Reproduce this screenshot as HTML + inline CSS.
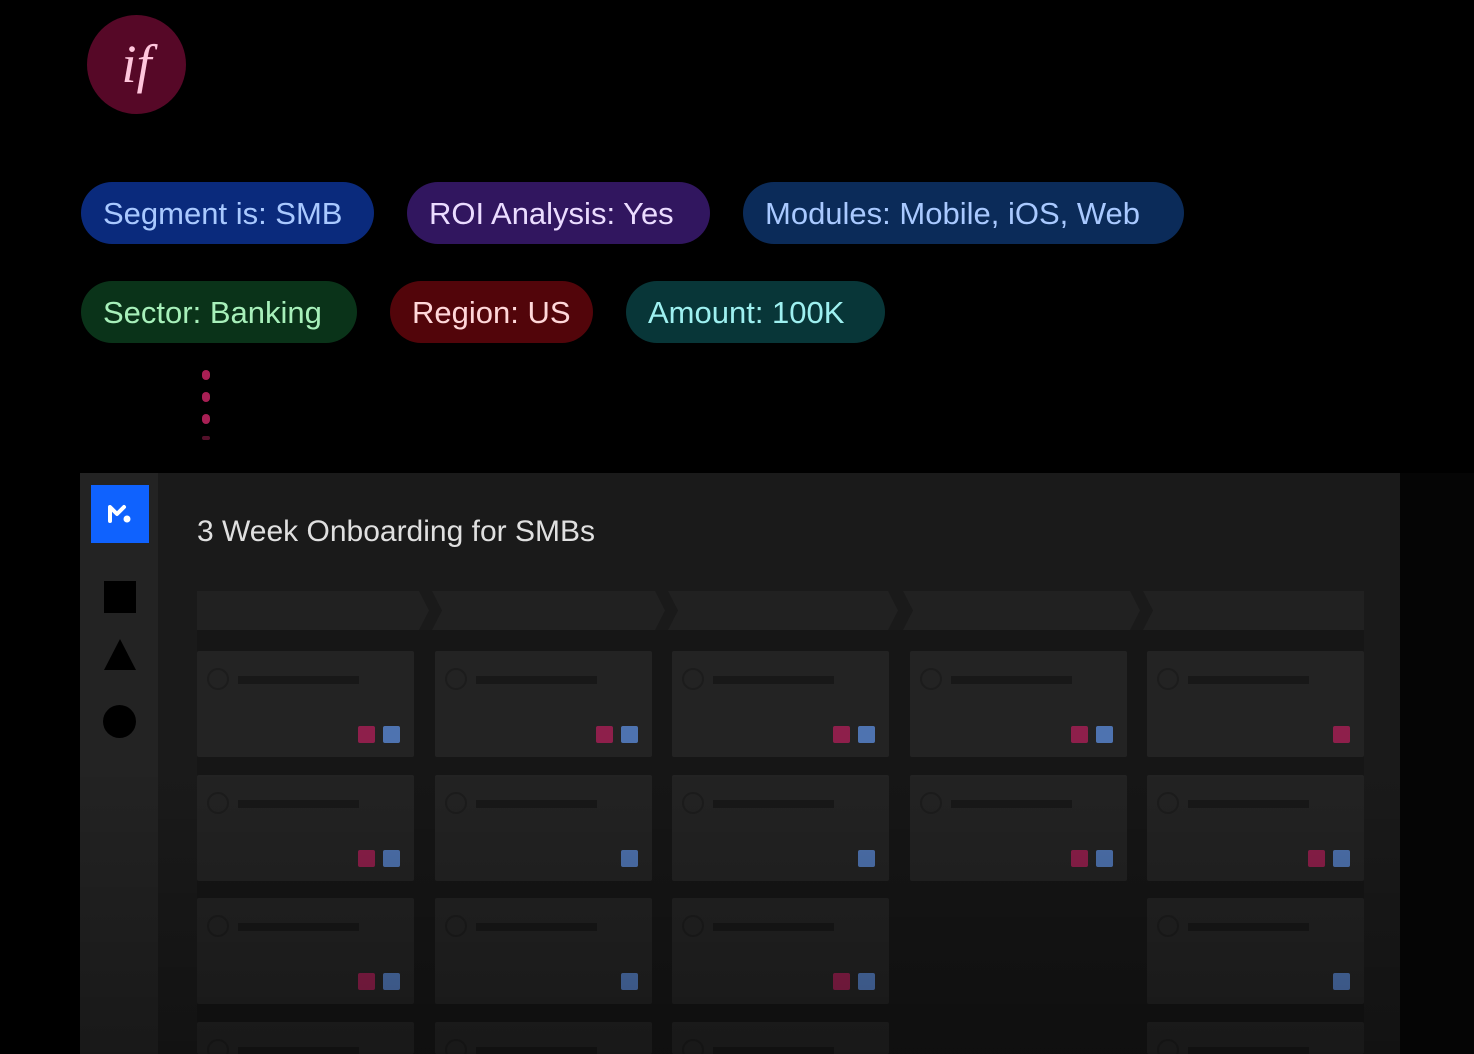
<!DOCTYPE html>
<html style="width:1474px;height:1054px;overflow:hidden"><head><meta charset="utf-8"><style>
*{margin:0;padding:0;box-sizing:border-box}
body{width:1474px;height:1054px;background:#000;position:relative;overflow:hidden;font-family:"Liberation Sans",sans-serif}
.a{position:absolute}
.logo{left:87px;top:15px;width:99px;height:99px;border-radius:50%;background:#560827;color:#ffc6dc;font-family:"Liberation Serif",serif;font-style:italic;font-size:54px;line-height:99px;text-align:center}
.pill{position:absolute;height:62px;border-radius:31px;font-size:31px;line-height:64px;padding-left:22px;white-space:nowrap}
.dot{position:absolute;left:202px;width:8px;height:10px;border-radius:4px;background:#a81f54}
.panel{left:80px;top:473px;width:1320px;height:581px;background:#1a1a1a}
.side{left:80px;top:473px;width:78px;height:581px;background:#232323}
.hdr{position:absolute;top:591px;height:39px;background:#212121}
.card{position:absolute;width:217px;height:106px;background:#232323;border-radius:2px}
.card .c{position:absolute;left:10px;top:17px;width:22px;height:22px;border-radius:50%;border:2px solid #1c1c1c}
.card .l{position:absolute;left:41px;top:25px;width:121px;height:8px;background:#181818}
.sq{position:absolute;top:75px;width:17px;height:17px;border-radius:2px}
.r{background:#8e1f4b}.b{background:#4e73b0}
.clip{position:absolute;left:0;top:0;width:1474px;height:1054px;overflow:hidden}
</style></head><body><div class="clip">
<div class="a logo">if</div>

<div class="pill" style="left:81px;top:182px;width:293px;background:#0a2a7c;color:#a9c9ff">Segment is: SMB</div>
<div class="pill" style="left:407px;top:182px;width:303px;background:#31165f;color:#ebdcff">ROI Analysis: Yes</div>
<div class="pill" style="left:743px;top:182px;width:441px;background:#0b2b59;color:#a9c9ff">Modules: Mobile, iOS, Web</div>
<div class="pill" style="left:81px;top:281px;width:276px;background:#0a3319;color:#a7f0ba">Sector: Banking</div>
<div class="pill" style="left:390px;top:281px;width:203px;background:#52050a;color:#ffd7d9">Region: US</div>
<div class="pill" style="left:626px;top:281px;width:259px;background:#083638;color:#9ef0f0">Amount: 100K</div>

<div class="dot" style="top:370px"></div>
<div class="dot" style="top:392px"></div>
<div class="dot" style="top:414px"></div>
<div class="dot" style="top:436px;height:4px;opacity:.5"></div>

<div class="a panel"></div>
<div class="a side"></div>
<div class="a" style="left:91px;top:485px;width:58px;height:58px;background:#0f62fe"></div>
<svg class="a" style="left:107px;top:503px" width="26" height="22" viewBox="0 0 26 22"><path d="M3 18V4l7 7 7-7" stroke="#fff" stroke-width="4" fill="none" stroke-linecap="round" stroke-linejoin="round"/><circle cx="20" cy="16" r="3.5" fill="#fff"/></svg>
<div class="a" style="left:104px;top:581px;width:32px;height:32px;background:#000"></div>
<div class="a" style="left:104px;top:639px;width:0;height:0;border-left:16px solid transparent;border-right:16px solid transparent;border-bottom:31px solid #000"></div>
<div class="a" style="left:103px;top:705px;width:33px;height:33px;border-radius:50%;background:#000"></div>
<div class="a" style="left:197px;top:515px;color:#e0e0e0;font-size:30px">3 Week Onboarding for SMBs</div>

<div class="a" style="left:197px;top:630px;width:1167px;height:424px;background:#161616"></div>
<div class="hdr" style="left:197px;width:232px;clip-path:polygon(0 0,222px 0,232px 50%,222px 100%,0 100%)"></div>
<div class="hdr" style="left:432px;width:233px;clip-path:polygon(0 0,223px 0,233px 50%,223px 100%,0 100%,10px 50%)"></div>
<div class="hdr" style="left:668px;width:230px;clip-path:polygon(0 0,220px 0,230px 50%,220px 100%,0 100%,10px 50%)"></div>
<div class="hdr" style="left:903px;width:237px;clip-path:polygon(0 0,227px 0,237px 50%,227px 100%,0 100%,10px 50%)"></div>
<div class="hdr" style="left:1143px;width:221px;clip-path:polygon(0 0,221px 0,221px 100%,0 100%,10px 50%)"></div>

<div class="card" style="left:197px;top:651px"><div class="c"></div><div class="l"></div><div class="sq r" style="left:161px"></div><div class="sq b" style="left:186px"></div></div>
<div class="card" style="left:435px;top:651px"><div class="c"></div><div class="l"></div><div class="sq r" style="left:161px"></div><div class="sq b" style="left:186px"></div></div>
<div class="card" style="left:672px;top:651px"><div class="c"></div><div class="l"></div><div class="sq r" style="left:161px"></div><div class="sq b" style="left:186px"></div></div>
<div class="card" style="left:910px;top:651px"><div class="c"></div><div class="l"></div><div class="sq r" style="left:161px"></div><div class="sq b" style="left:186px"></div></div>
<div class="card" style="left:1147px;top:651px"><div class="c"></div><div class="l"></div><div class="sq r" style="left:186px"></div></div>

<div class="card" style="left:197px;top:775px"><div class="c"></div><div class="l"></div><div class="sq r" style="left:161px"></div><div class="sq b" style="left:186px"></div></div>
<div class="card" style="left:435px;top:775px"><div class="c"></div><div class="l"></div><div class="sq b" style="left:186px"></div></div>
<div class="card" style="left:672px;top:775px"><div class="c"></div><div class="l"></div><div class="sq b" style="left:186px"></div></div>
<div class="card" style="left:910px;top:775px"><div class="c"></div><div class="l"></div><div class="sq r" style="left:161px"></div><div class="sq b" style="left:186px"></div></div>
<div class="card" style="left:1147px;top:775px"><div class="c"></div><div class="l"></div><div class="sq r" style="left:161px"></div><div class="sq b" style="left:186px"></div></div>

<div class="card" style="left:197px;top:898px"><div class="c"></div><div class="l"></div><div class="sq r" style="left:161px"></div><div class="sq b" style="left:186px"></div></div>
<div class="card" style="left:435px;top:898px"><div class="c"></div><div class="l"></div><div class="sq b" style="left:186px"></div></div>
<div class="card" style="left:672px;top:898px"><div class="c"></div><div class="l"></div><div class="sq r" style="left:161px"></div><div class="sq b" style="left:186px"></div></div>
<div class="card" style="left:1147px;top:898px"><div class="c"></div><div class="l"></div><div class="sq b" style="left:186px"></div></div>

<div class="card" style="left:197px;top:1022px;height:32px"><div class="c"></div><div class="l"></div></div>
<div class="card" style="left:435px;top:1022px;height:32px"><div class="c"></div><div class="l"></div></div>
<div class="card" style="left:672px;top:1022px;height:32px"><div class="c"></div><div class="l"></div></div>
<div class="card" style="left:1147px;top:1022px;height:32px"><div class="c"></div><div class="l"></div></div>

<div class="a" style="left:0;top:473px;width:1474px;height:581px;background:linear-gradient(180deg,rgba(0,0,0,0) 50%,rgba(0,0,0,.3) 100%)"></div>
<div class="a" style="left:1400px;top:473px;width:74px;height:581px;background:#050505"></div>
</div></body></html>
